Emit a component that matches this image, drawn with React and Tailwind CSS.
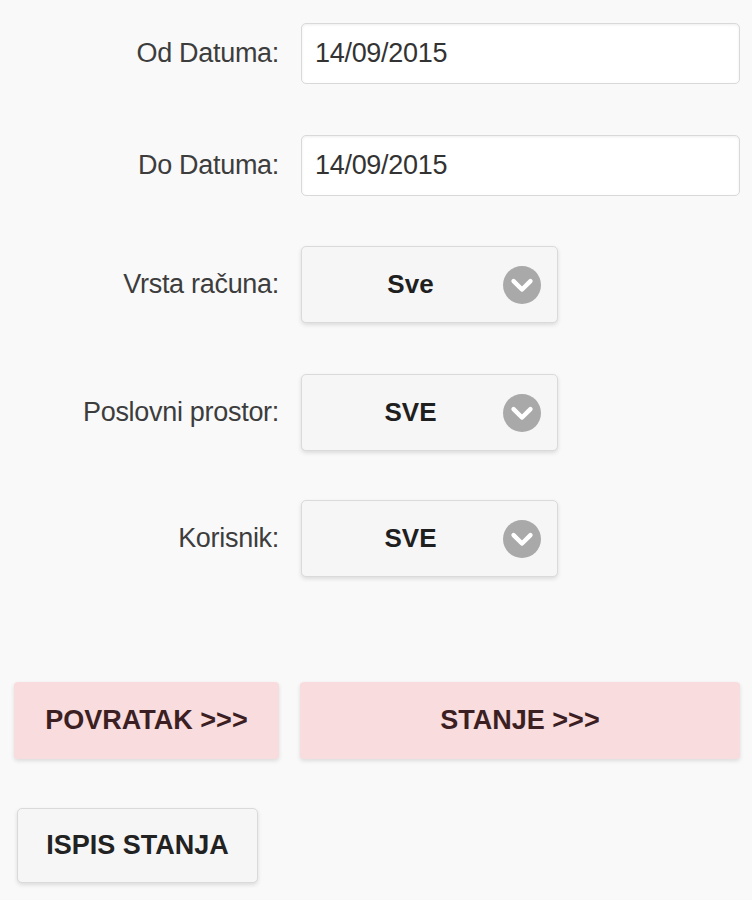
import React from "react";

function Chevron() {
  return (
    <div className="w-[38px] h-[38px] rounded-full bg-[#a9a9a9] flex items-center justify-center">
      <svg className="w-[26px] h-[26px]" viewBox="0 0 20 20" fill="none">
        <path d="M3.5 7 L10 13.5 L16.5 7" stroke="#ffffff" strokeWidth="3.4" strokeLinecap="round" strokeLinejoin="round" />
      </svg>
    </div>
  );
}

function Label({ children }) {
  return (
    <div className="w-[280px] shrink-0 pr-[1px] text-right text-[27px] text-[#3d3d3d] tracking-[-0.3px]">
      {children}
    </div>
  );
}

function DateRow({ label, value, className }) {
  return (
    <div className={`flex items-center ${className}`}>
      <Label>{label}</Label>
      <div className="ml-[21px] flex-1 h-[61px] flex items-center bg-white border border-[#d9d9d9] rounded-[5px] shadow-[inset_0_1px_3px_rgba(0,0,0,0.07)] px-[13px] text-[27px] text-[#333] tracking-[-0.3px]">
        {value}
      </div>
    </div>
  );
}

function SelectRow({ label, value, className }) {
  return (
    <div className={`flex items-center ${className}`}>
      <Label>{label}</Label>
      <div className="ml-[21px] w-[257px] h-[77px] flex items-center bg-[#f6f6f6] border border-[#dadada] rounded-[5px] shadow-[0_2px_4px_rgba(0,0,0,0.12)]">
        <span className="flex-1 pl-[16px] text-center text-[26px] font-bold text-[#1f1f1f]">{value}</span>
        <div className="mr-[16px]">
          <Chevron />
        </div>
      </div>
    </div>
  );
}

export default function App() {
  return (
    <div className="min-h-screen bg-[#f9f9f9] font-[family-name:'Liberation_Sans',Arial,sans-serif]">
      <div className="pt-[23px] pr-[12px]">
        <DateRow label="Od Datuma:" value="14/09/2015" />
        <DateRow label="Do Datuma:" value="14/09/2015" className="mt-[51px]" />
        <SelectRow label="Vrsta računa:" value="Sve" className="mt-[50px]" />
        <SelectRow label="Poslovni prostor:" value="SVE" className="mt-[51px]" />
        <SelectRow label="Korisnik:" value="SVE" className="mt-[49px]" />

        <div className="mt-[105px] flex">
          <button className="ml-[14px] w-[265px] h-[77px] rounded-[4px] bg-[#f9dcdd] shadow-[0_2px_4px_rgba(0,0,0,0.12)] text-[27px] font-bold text-[#3b1f23]">
            POVRATAK &gt;&gt;&gt;
          </button>
          <button className="ml-[21px] w-[440px] h-[77px] rounded-[4px] bg-[#f9dcdd] shadow-[0_2px_4px_rgba(0,0,0,0.12)] text-[27px] font-bold text-[#3b1f23]">
            STANJE &gt;&gt;&gt;
          </button>
        </div>

        <button className="mt-[49px] ml-[17px] w-[241px] h-[75px] rounded-[5px] bg-[#f6f6f6] border border-[#dadada] shadow-[0_2px_4px_rgba(0,0,0,0.12)] text-[27px] font-bold text-[#222]">
          ISPIS STANJA
        </button>
      </div>
    </div>
  );
}
